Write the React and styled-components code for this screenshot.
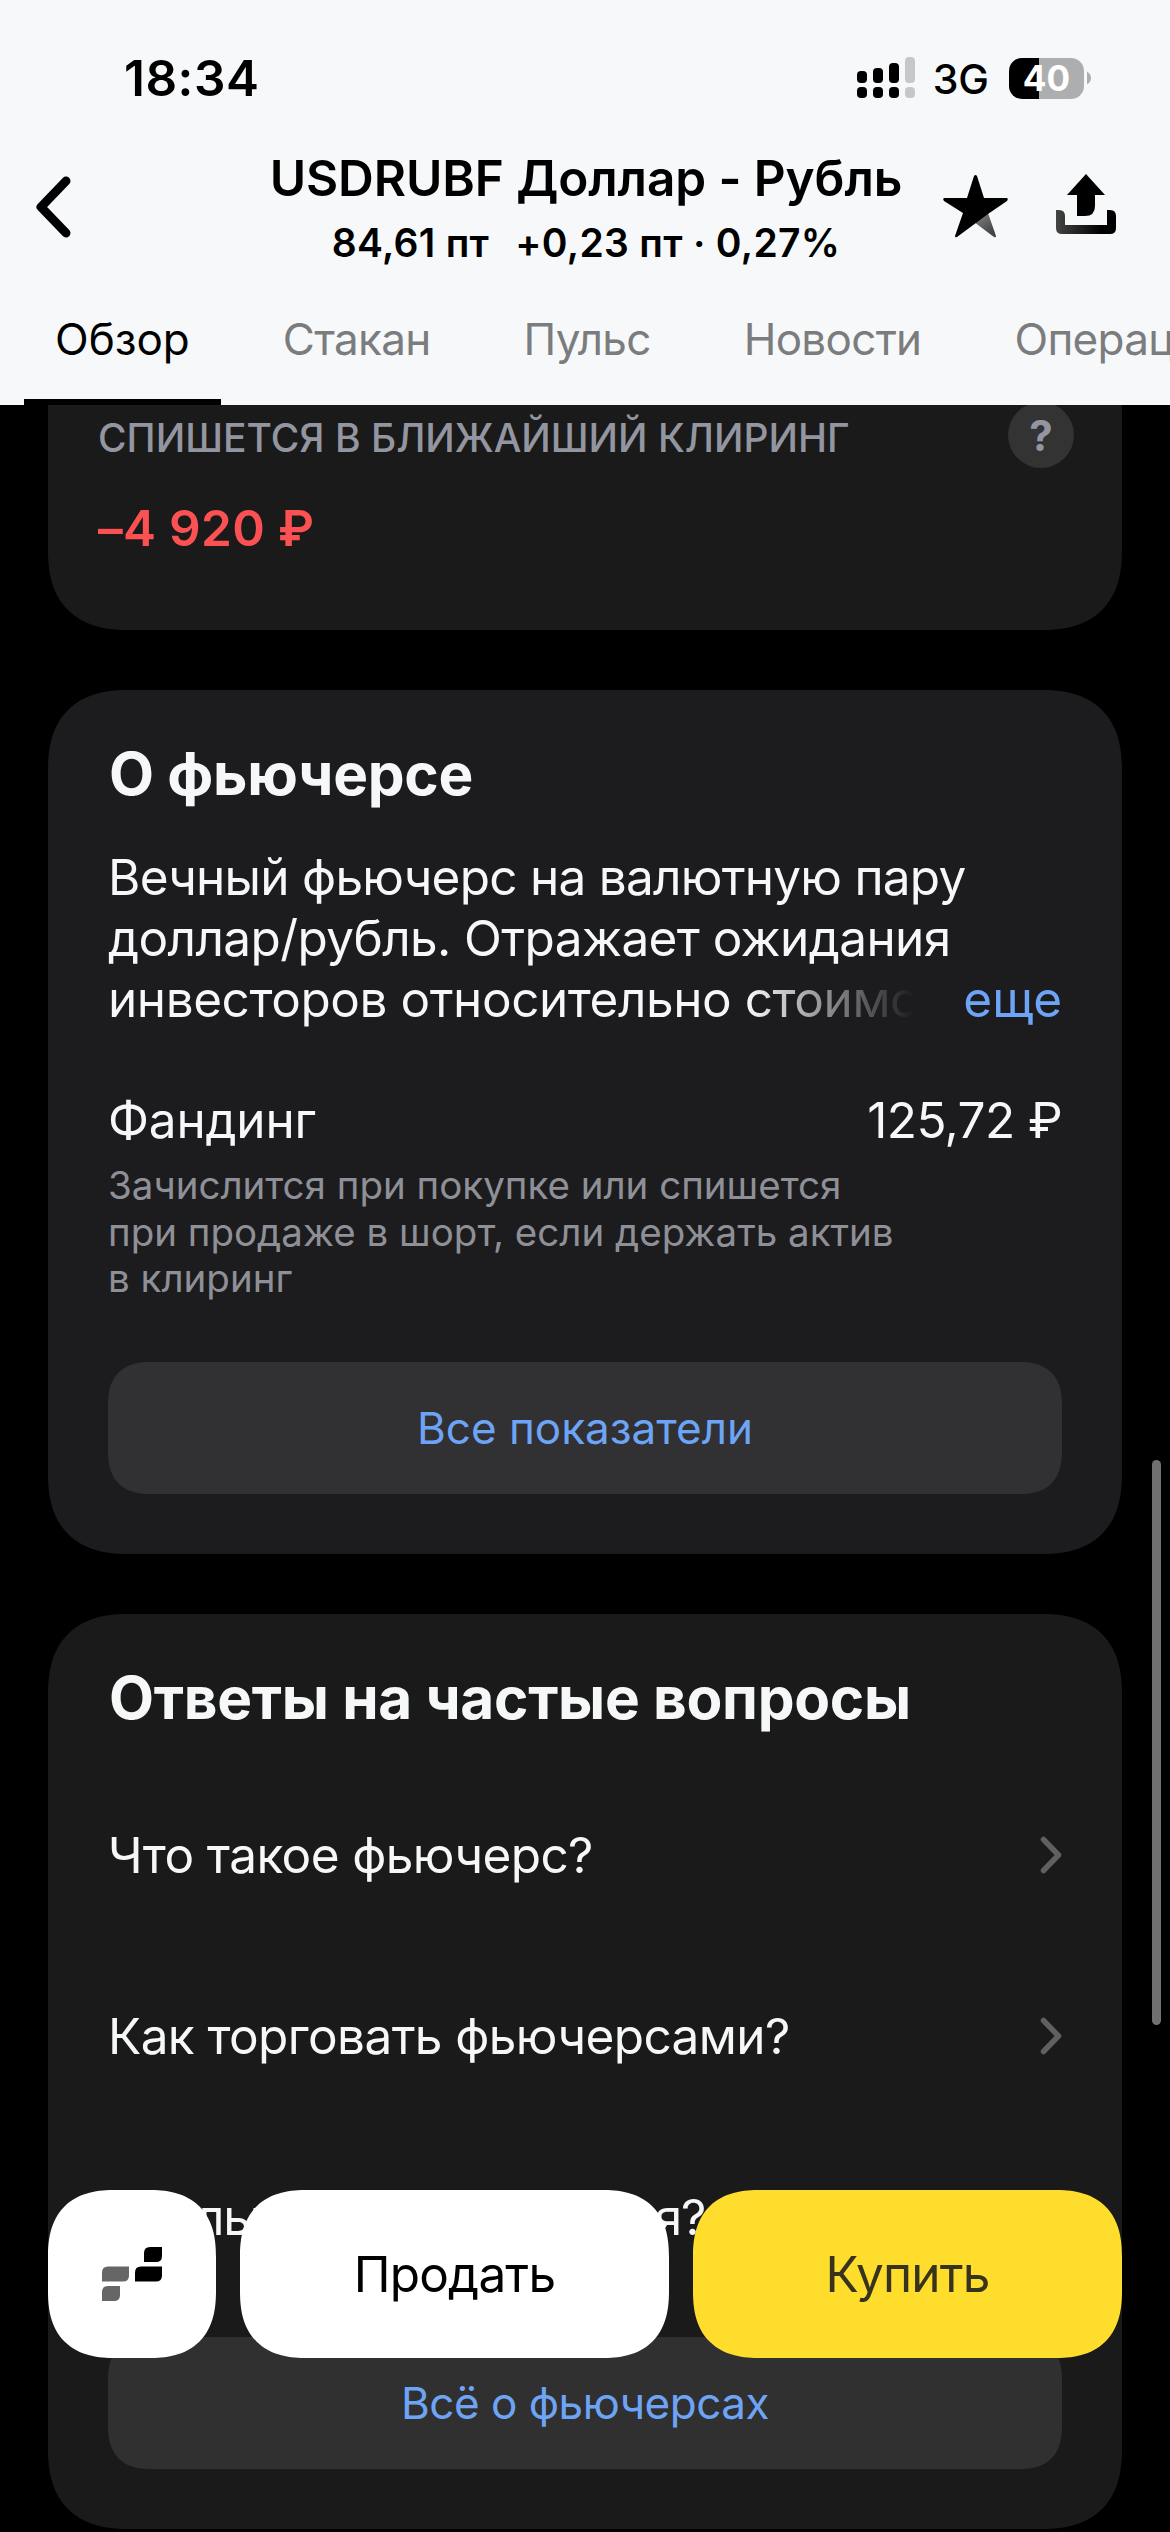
import React from "react";
import styled, { createGlobalStyle, css } from "styled-components";

const GlobalStyle = createGlobalStyle`
  * {
    box-sizing: border-box;
  }
  body {
    margin: 0;
    background: #000;
    font-family: Inter, "Noto Sans", sans-serif;
    font-kerning: normal;
  }
  button {
    border: 0;
    padding: 0;
    font-family: inherit;
  }
`;

const flexCenter = css`
display: flex;
align-items: center;
justify-content: center;
`;

const bodyText = css`
font-size: 49.5px;
line-height: 61px;
letter-spacing: -0.6px;
color: #f6f7f8;
white-space: nowrap;
`;

// smooth iOS-like corners where the browser can draw them
const smooth = (radius) => css`
border-radius: ${radius}px;
@supports (corner-shape: superellipse(1.3)) {
    border-radius: ${radius * 1.2}px;
    corner-shape: superellipse(1.3);
}
`;

const S = {
    Screen: styled.div`
    position: relative;
    display: flex;
    flex-direction: column;
    width: 1170px;
    height: 2532px;
    overflow: hidden;
    background: #000;
    `,
    Header: styled.header`
    flex: none;
    position: relative;
    z-index: 1;
    height: 405px;
    background: #f7f8fa;
    color: #000;
    `,
    StatusBar: styled.div`
    display: flex;
    align-items: center;
    justify-content: space-between;
    height: 156px;
    padding: 0 79px 0 124px;
    `,
    Time: styled.div`
    font-size: 49.5px;
    font-weight: 600;
    letter-spacing: 0.5px;
    `,
    StatusIcons: styled.div`
    display: flex;
    align-items: center;
    `,
    Network: styled.span`
    margin: 2px 20px 0 18px;
    font-size: 41px;
    font-weight: 500;
    `,
    Battery: styled.div`
    ${flexCenter};
    width: 75px;
    height: 41px;
    border-radius: 13px;
    background: linear-gradient(90deg, #000 30px, #adaeb0 30px);
    color: #fff;
    font-size: 35px;
    font-weight: 700;
    `,
    Nav: styled.div`
    display: grid;
    grid-template-columns: 1fr auto 1fr;
    align-items: start;
    height: 118px;
    padding: 0 54px 0 36px;
    `,
    Titles: styled.div`
    display: flex;
    flex-direction: column;
    align-items: center;
    gap: 19px;
    margin-left: 20px;
    white-space: nowrap;
    `,
    Title: styled.h1`
    margin: 0;
    font-size: 49.5px;
    line-height: 44px;
    font-weight: 600;
    letter-spacing: -0.1px;
    `,
    Price: styled.div`
    display: flex;
    gap: 26px;
    font-size: 39px;
    line-height: 48px;
    font-weight: 600;
    letter-spacing: 0.3px;
    `,
    NavActions: styled.div`
    display: flex;
    justify-content: flex-end;
    gap: 48px;
    `,
    Tabs: styled.nav`
    display: flex;
    gap: 31px;
    height: 131px;
    padding-left: 24px;
    overflow: hidden;
    `,
    Tab: styled.div`
    flex: none;
    height: 131px;
    padding: 0 31px;
    border-bottom: 6px solid ${(p) => (p.$active ? "#000" : "transparent")};
    color: ${(p) => (p.$active ? "#000" : "#7b7c7e")};
    font-size: 44px;
    line-height: 130px;
    letter-spacing: ${(p) => (p.$active ? 0 : -0.7)}px;
    `,
    Content: styled.main`
    flex: 1;
    display: flex;
    flex-direction: column;
    gap: 60px;
    min-height: 0;
    padding: 0 48px;
    `,
    ClearingCard: styled.section`
    flex: none;
    height: 300px;
    margin-top: -75px;
    padding: 75px 48px 0 50px;
    ${smooth(68)};
    background: #1a1a1a;
    `,
    ClearingHead: styled.div`
    display: flex;
    align-items: center;
    justify-content: space-between;
    height: 66px;
    margin-top: -3px;
    `,
    Caption: styled.div`
    padding-top: 4px;
    color: #9396a0;
    font-size: 39px;
    font-weight: 500;
    `,
    Help: styled.div`
    ${flexCenter};
    width: 66px;
    height: 66px;
    border-radius: 50%;
    background: #333;
    color: #9396a0;
    font-size: 42px;
    font-weight: 700;
    `,
    Loss: styled.div`
    margin-top: 30px;
    color: #fc5152;
    font-size: 49.5px;
    line-height: 60px;
    font-weight: 600;
    letter-spacing: 0.3px;
    `,
    Card: styled.section`
    flex: none;
    display: flex;
    flex-direction: column;
    height: ${(p) => p.$height}px;
    padding: 60px;
    ${smooth(68)};
    background: ${(p) => p.$bg};
    `,
    CardTitle: styled.h2`
    margin: 0 0 0 1px;
    color: #f6f7f8;
    font-size: 58.5px;
    line-height: 48px;
    font-weight: 700;
    letter-spacing: -0.3px;
    white-space: nowrap;
    `,
    About: styled.div`
    ${bodyText};
    margin-top: 49px;
    `,
    FirstLine: styled.div`
    letter-spacing: -0.75px;
    `,
    LastLine: styled.div`
    display: flex;
    justify-content: space-between;
    letter-spacing: -0.45px;
    `,
    Fade: styled.span`
    background: linear-gradient(90deg, #f6f7f8 640px, rgba(246, 247, 248, 0) 806px);
    background-clip: text;
    color: transparent;
    `,
    More: styled.span`
    color: #6ea4f5;
    letter-spacing: 0;
    `,
    Indicator: styled.div`
    ${bodyText};
    display: flex;
    justify-content: space-between;
    margin-top: 60px;
    `,
    IndicatorName: styled.span`
    letter-spacing: -0.2px;
    `,
    Hint: styled.div`
    width: 830px;
    margin-top: 11px;
    color: #8f9097;
    font-size: 38.5px;
    line-height: 46.5px;
    `,
    LinkButton: styled.button`
    ${flexCenter};
    flex: none;
    height: 132px;
    margin-top: auto;
    ${smooth(36)};
    background: ${(p) => p.$bg};
    color: #6ea4f5;
    font-size: 44px;
    letter-spacing: ${(p) => p.$spacing || 0}px;
    `,
    Questions: styled.div`
    display: flex;
    flex-direction: column;
    margin-top: 42.5px;
    `,
    Question: styled.div`
    ${bodyText};
    display: flex;
    align-items: center;
    justify-content: space-between;
    height: 181px;

    &:last-child {
        letter-spacing: -1.2px;
    }
    `,
    BottomBar: styled.div`
    position: absolute;
    left: 48px;
    right: 48px;
    top: 2190px;
    display: flex;
    gap: 24px;
    height: 168px;
    `,
    Action: styled.button`
    ${flexCenter};
    flex: ${(p) => (p.$square ? "none" : 1)};
    width: 168px;
    ${smooth(56)};
    background: ${(p) => (p.$buy ? "#fedd2d" : "#fff")};
    color: ${(p) => (p.$buy ? "#38331c" : "#000")};
    font-size: 49.5px;
    letter-spacing: -0.8px;
    `,
    Scrollbar: styled.div`
    position: absolute;
    top: 1460px;
    right: 9px;
    width: 9px;
    height: 565px;
    border-radius: 5px;
    background: #707070;
    `,
};

const tabs = ["Обзор", "Стакан", "Пульс", "Новости", "Операции"];

const questions = [
    "Что такое фьючерс?",
    "Как торговать фьючерсами?",
    "Сколько стоит комиссия?",
];

const SignalIcon = () => (
    <svg width="58" height="42" viewBox="0 0 58 42">
        <rect x="0" y="14" width="10" height="12" rx="4" />
        <rect x="16" y="11" width="10" height="15" rx="4" />
        <rect x="32" y="6" width="10" height="20" rx="4" />
        <rect x="48" y="0" width="10" height="26" rx="4" fill="#c6c7c9" />
        <rect x="0" y="30" width="10" height="11" rx="4" />
        <rect x="16" y="30" width="10" height="11" rx="4" />
        <rect x="32" y="30" width="10" height="11" rx="4" />
        <rect x="48" y="30" width="10" height="11" rx="4" fill="#c6c7c9" />
    </svg>
);

const BatteryTip = () => (
    <svg width="7" height="14" viewBox="0 0 7 14">
        <path d="M3 0.5C5.4 2 7 4.300 7 7S5.400 12 3 13.500Z" fill="#adaeb0" />
    </svg>
);

const BackIcon = () => (
    <svg width="36" height="100" viewBox="0 0 36 100">
        <path d="M30 25 L5 51 L30 77" fill="none" stroke="#000" strokeWidth="9" strokeLinecap="round" strokeLinejoin="round" />
    </svg>
);

const StarIcon = () => (
    <svg width="65" height="100" viewBox="0 0 65 100">
        <defs>
            <linearGradient id="starTail" x1="0.2" y1="0.2" x2="0.7" y2="0.9">
                <stop offset="0" stopColor="#777" />
                <stop offset="1" stopColor="#444" />
            </linearGradient>
        </defs>
        <path d="M33 61 L45 57 L53 80 Q53 82 51 81 L31 66 Z" fill="url(#starTail)" />
        <path
            d="M31 20 Q32.500 18 34 20 L41 42 H64 Q65.500 43 64 45 L45 58 L14 81 Q12 82 12 80 L20 57 L1 45 Q-0.500 43 1 42 H24 Z"
            fill="#000"
        />
    </svg>
);

const ShareIcon = () => (
    <svg width="60" height="100" viewBox="0 0 60 100">
        <defs>
            <linearGradient id="tray" x1="0" y1="0" x2="1" y2="0">
                <stop offset="0" stopColor="#444" />
                <stop offset="0.75" stopColor="#000" />
            </linearGradient>
        </defs>
        <path d="M30 18 L49 39 H39 V50 Q39 60 29 60 H21 V39 H11 Z" fill="#000" />
        <path d="M0 54 H3 Q9 54 9 60 V69 H51 V54 H54 Q60 54 60 60 V72 Q60 78 54 78 H6 Q0 78 0 72 Z" fill="url(#tray)" />
    </svg>
);

const ChevronIcon = () => (
    <svg width="22" height="38" viewBox="0 0 22 38">
        <path d="M3.500 3.500 L18.500 19 L3.500 34.500" fill="none" stroke="#606062" strokeWidth="5.5" strokeLinecap="round" strokeLinejoin="round" />
    </svg>
);

const TerminalIcon = () => (
    <svg width="60" height="54" viewBox="0 0 60 54">
        <path d="M48 0 H60 V9 Q60 15 54 15 H42 V6 Q42 0 48 0 Z" fill="#000" />
        <path d="M39 19.500 H60 V28.500 Q60 34.500 54 34.500 H33 V25.500 Q33 19.500 39 19.500 Z" fill="#000" />
        <path d="M6 19.500 H27 V28.500 Q27 34.500 21 34.500 H0 V25.500 Q0 19.500 6 19.500 Z" fill="#666" />
        <path d="M6 39 H18 V48 Q18 54 12 54 H0 V45 Q0 39 6 39 Z" fill="#666" />
    </svg>
);

const App = () => {
    return (
        <>
            <GlobalStyle />
            <S.Screen>
                <S.Header>
                    <S.StatusBar>
                        <S.Time>18:34</S.Time>
                        <S.StatusIcons>
                            <SignalIcon />
                            <S.Network>3G</S.Network>
                            <S.Battery>40</S.Battery>
                            <BatteryTip />
                        </S.StatusIcons>
                    </S.StatusBar>
                    <S.Nav>
                        <BackIcon />
                        <S.Titles>
                            <S.Title>USDRUBF Доллар - Рубль</S.Title>
                            <S.Price>
                                <span>84,61 пт</span>
                                <span>+0,23 пт · 0,27%</span>
                            </S.Price>
                        </S.Titles>
                        <S.NavActions>
                            <StarIcon />
                            <ShareIcon />
                        </S.NavActions>
                    </S.Nav>
                    <S.Tabs>
                        {tabs.map((tab, i) => (
                            <S.Tab key={tab} $active={i === 0}>{tab}</S.Tab>
                        ))}
                    </S.Tabs>
                </S.Header>
                <S.Content>
                    <S.ClearingCard>
                        <S.ClearingHead>
                            <S.Caption>СПИШЕТСЯ В БЛИЖАЙШИЙ КЛИРИНГ</S.Caption>
                            <S.Help>?</S.Help>
                        </S.ClearingHead>
                        <S.Loss>–4 920 ₽</S.Loss>
                    </S.ClearingCard>
                    <S.Card $height={864} $bg="#1c1c1e">
                        <S.CardTitle>О фьючерсе</S.CardTitle>
                        <S.About>
                            <S.FirstLine>Вечный фьючерс на валютную пару</S.FirstLine>
                            <div>доллар/рубль. Отражает ожидания</div>
                            <S.LastLine>
                                <S.Fade>инвесторов относительно стоимо</S.Fade>
                                <S.More>еще</S.More>
                            </S.LastLine>
                        </S.About>
                        <S.Indicator>
                            <S.IndicatorName>Фандинг</S.IndicatorName>
                            <span>125,72 ₽</span>
                        </S.Indicator>
                        <S.Hint>
                            Зачислится при покупке или спишется<br />
                            при продаже в шорт, если держать актив<br />
                            в клиринг
                        </S.Hint>
                        <S.LinkButton $bg="#313133">Все показатели</S.LinkButton>
                    </S.Card>
                    <S.Card $height={915} $bg="#1a1a1a">
                        <S.CardTitle>Ответы на частые вопросы</S.CardTitle>
                        <S.Questions>
                            {questions.map((question) => (
                                <S.Question key={question}>
                                    <span>{question}</span>
                                    <ChevronIcon />
                                </S.Question>
                            ))}
                        </S.Questions>
                        <S.LinkButton $bg="#303030" $spacing={-0.5}>Всё о фьючерсах</S.LinkButton>
                    </S.Card>
                </S.Content>
                <S.BottomBar>
                    <S.Action $square>
                        <TerminalIcon />
                    </S.Action>
                    <S.Action>Продать</S.Action>
                    <S.Action $buy>Купить</S.Action>
                </S.BottomBar>
                <S.Scrollbar />
            </S.Screen>
        </>
    );
};

export default App;
